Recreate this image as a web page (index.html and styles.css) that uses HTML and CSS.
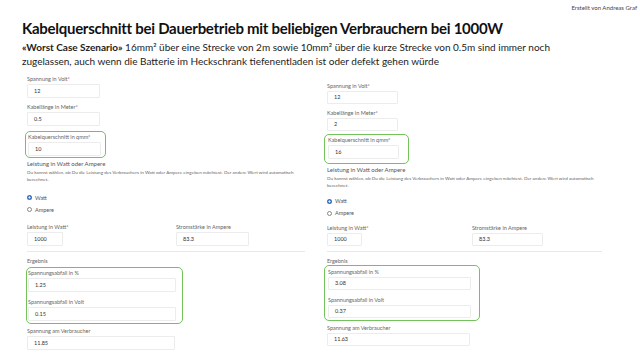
FILE: index.html
```html
<!DOCTYPE html>
<html lang="de">
<head>
    <meta charset="UTF-8">
    <title>Kabelquerschnitt bei Dauerbetrieb</title>
    <link rel="stylesheet" href="styles.css">
</head>
<body>
    <div class="slide">
        <div class="credit">Erstellt von Andreas Graf</div>
        <h1 class="title">Kabelquerschnitt bei Dauerbetrieb mit beliebigen Verbrauchern bei 1000W</h1>
        <p class="lead"><b>«Worst Case Szenario»</b> 16mm² über eine Strecke von 2m sowie 10mm² über die kurze Strecke von 0.5m sind immer noch<br>zugelassen, auch wenn die Batterie im Heckschrank tiefenentladen ist oder defekt gehen würde</p>

        <div class="shots">
            <!-- kurze Strecke, 10mm² -->
            <div class="calc calc-a">
                <div class="field">
                    <label>Spannung in Volt*</label>
                    <div class="input w-s">12</div>
                </div>
                <div class="field">
                    <label>Kabellänge in Meter*</label>
                    <div class="input w-s">0.5</div>
                </div>
                <div class="mark mark-top">
                    <label>Kabelquerschnitt in qmm*</label>
                    <div class="input w-s">10</div>
                </div>
                <div class="group">Leistung in Watt oder Ampere</div>
                <div class="hint">Du kannst wählen, ob Du die Leistung des Verbrauchers in Watt oder Ampere eingeben möchtest. Der andere Wert wird automatisch berechnet.</div>
                <div class="radios">
                    <div class="radio on"><span class="dot"></span>Watt</div>
                    <div class="radio"><span class="dot"></span>Ampere</div>
                </div>
                <div class="pair">
                    <div class="field">
                        <label>Leistung in Watt*</label>
                        <div class="input w-xs">1000</div>
                    </div>
                    <div class="field">
                        <label>Stromstärke in Ampere</label>
                        <div class="input w-s">83.3</div>
                    </div>
                </div>
                <div class="rule"></div>
                <div class="section">Ergebnis</div>
                <div class="mark mark-bottom">
                    <label>Spannungsabfall in %</label>
                    <div class="input w-l">1.25</div>
                    <label>Spannungsabfall in Volt</label>
                    <div class="input w-l">0.15</div>
                </div>
                <div class="field">
                    <label>Spannung am Verbraucher</label>
                    <div class="input w-l">11.85</div>
                </div>
            </div>

            <!-- lange Strecke, 16mm² -->
            <div class="calc calc-b">
                <div class="field">
                    <label>Spannung in Volt*</label>
                    <div class="input w-s">12</div>
                </div>
                <div class="field">
                    <label>Kabellänge in Meter*</label>
                    <div class="input w-s">2</div>
                </div>
                <div class="mark mark-top">
                    <label>Kabelquerschnitt in qmm*</label>
                    <div class="input w-s">16</div>
                </div>
                <div class="group">Leistung in Watt oder Ampere</div>
                <div class="hint">Du kannst wählen, ob Du die Leistung des Verbrauchers in Watt oder Ampere eingeben möchtest. Der andere Wert wird automatisch berechnet.</div>
                <div class="radios">
                    <div class="radio on"><span class="dot"></span>Watt</div>
                    <div class="radio"><span class="dot"></span>Ampere</div>
                </div>
                <div class="pair">
                    <div class="field">
                        <label>Leistung in Watt*</label>
                        <div class="input w-xs">1000</div>
                    </div>
                    <div class="field">
                        <label>Stromstärke in Ampere</label>
                        <div class="input w-s">83.3</div>
                    </div>
                </div>
                <div class="rule"></div>
                <div class="section">Ergebnis</div>
                <div class="mark mark-bottom">
                    <label>Spannungsabfall in %</label>
                    <div class="input w-l">3.08</div>
                    <label>Spannungsabfall in Volt</label>
                    <div class="input w-l">0.37</div>
                </div>
                <div class="field">
                    <label>Spannung am Verbraucher</label>
                    <div class="input w-l">11.63</div>
                </div>
            </div>
        </div>
    </div>
</body>
</html>
```

FILE: styles.css
```css
body { margin: 0; background: #fff; color: #222; font-family: Lato, "Noto Sans", sans-serif; }
.slide { width: 640px; height: 359px; overflow: hidden; }

.credit { text-align: right; font-size: 6px; line-height: 8px; color: #444; padding: 4px 3px 0 0; height: 6px; }
.title { margin: 8px 0 0 22px; font-size: 15px; line-height: 20px; letter-spacing: -0.28px; font-weight: 700; color: #111; }
.lead { margin: 2px 0 0 22px; width: 560px; font-size: 10px; line-height: 14px; color: #222; }
.lead b { font-weight: 700; }

.shots { display: flex; margin-top: 7px; }
.calc { color: #666; }
.calc-a { margin-left: 27px; width: 278px; }
.calc-b { margin-left: 22px; width: 275px; padding-top: 7px; }

.calc label { display: block; font-size: 5.5px; line-height: 8px; color: #666; }
.input { box-sizing: border-box; height: 14px; margin-top: 1px; border: 1px solid #ececec; border-radius: 1px; padding-left: 6px; font-size: 5.5px; line-height: 12px; color: #333; }
.field { margin-bottom: 5px; }

.calc-a .w-s { width: 73px; }
.calc-a .w-xs { width: 36px; }
.calc-a .w-l { width: 148px; }
.calc-b .w-s { width: 71px; }
.calc-b .w-xs { width: 35px; }
.calc-b .w-l { width: 143px; }
.calc-b .input { height: 13px; line-height: 11px; }
.calc-b .mark-top .input { height: 14px; line-height: 12px; }

.mark { border: 1.5px solid #72c35b; border-radius: 5px; }
.calc-a .mark-top { margin: 2px 0 0 -2px; width: 77px; padding: 1px 0 1px 2px; }
.calc-b .mark-top { margin: -2px 0 2px -3px; width: 80px; padding: 1px 0 4px 3px; }
.calc-a .mark-bottom { margin: 2px 0 3px -1px; width: 154px; padding: 1px 0 2px 1px; }
.calc-b .mark-bottom { margin: 0 0 3px -3px; width: 151px; padding: 2px 0 2px 3px; }
.mark-bottom .input + label { margin-top: 6px; }

.group { font-size: 6px; line-height: 8px; color: #555; }
.calc-a .group { margin-top: 2px; }
.hint { font-size: 4.6px; line-height: 7px; color: #666; margin-top: 1px; }
.calc-a .hint { width: 278px; }
.calc-b .hint { width: 270px; }

.calc-a .radios { margin-top: 8.5px; }
.calc-b .radios { margin-top: 6px; }
.radio { display: flex; align-items: center; gap: 3px; height: 12px; font-size: 5.5px; color: #555; }
.dot { box-sizing: border-box; width: 5px; height: 5px; border-radius: 50%; border: 0.8px solid #888; }
.radio.on .dot { border: none; background: radial-gradient(circle, #fff 0 0.9px, #3f72bd 1.1px); }

.pair { display: flex; margin-top: 5px; }
.calc-a .pair { margin-top: 7px; }
.calc-a .pair .field:first-child { width: 149px; }
.calc-b .pair .field:first-child { width: 145px; }
.pair .field { margin-bottom: 0; }

.rule { height: 1px; background: #e8e8e8; margin-top: 5px; }
.section { font-size: 5.5px; line-height: 8px; color: #666; margin-top: 5px; }
```
